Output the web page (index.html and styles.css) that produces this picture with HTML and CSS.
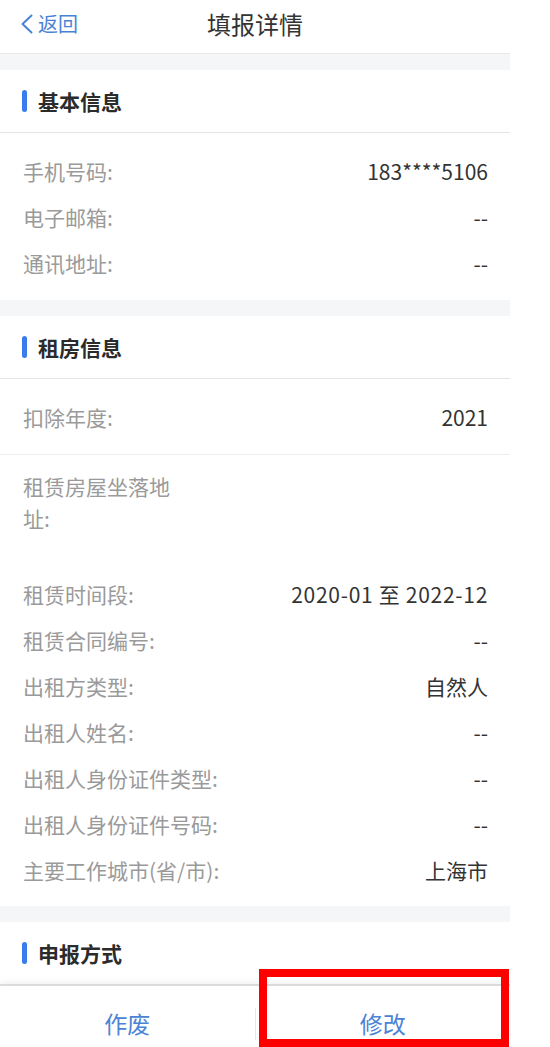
FILE: index.html
```html
<!DOCTYPE html>
<html lang="zh-CN">
<head>
<meta charset="utf-8">
<title>填报详情</title>
<link rel="stylesheet" href="styles.css">
</head>
<body>
<div class="app">
  <header class="nav">
    <a class="back">
      <svg class="chev" width="14" height="20" viewBox="0 0 14 20"><polyline points="11.5,1.5 2.5,10 11.5,18.5" fill="none" stroke="#4a83d6" stroke-width="2" stroke-linecap="round" stroke-linejoin="round"/></svg>
      <span>返回</span>
    </a>
    <h1 class="nav-title">填报详情</h1>
    <span class="nav-side"></span>
  </header>

  <main class="content">
    <section class="card">
      <div class="card-title"><span class="bar"></span>基本信息</div>
      <div class="group">
        <div class="row"><span class="label">手机号码:</span><span class="value">183****5106</span></div>
        <div class="row"><span class="label">电子邮箱:</span><span class="value">--</span></div>
        <div class="row"><span class="label">通讯地址:</span><span class="value">--</span></div>
      </div>
    </section>

    <section class="card">
      <div class="card-title"><span class="bar"></span>租房信息</div>
      <div class="group group-split">
        <div class="row"><span class="label">扣除年度:</span><span class="value">2021</span></div>
      </div>
      <div class="group group-last">
        <div class="row row-tall"><span class="label label-wrap">租赁房屋坐落地址:</span><span class="value"></span></div>
        <div class="row"><span class="label">租赁时间段:</span><span class="value value-wide">2020-01 至 2022-12</span></div>
        <div class="row"><span class="label">租赁合同编号:</span><span class="value">--</span></div>
        <div class="row"><span class="label">出租方类型:</span><span class="value">自然人</span></div>
        <div class="row"><span class="label">出租人姓名:</span><span class="value">--</span></div>
        <div class="row"><span class="label">出租人身份证件类型:</span><span class="value">--</span></div>
        <div class="row"><span class="label">出租人身份证件号码:</span><span class="value">--</span></div>
        <div class="row"><span class="label">主要工作城市(省/市):</span><span class="value">上海市</span></div>
      </div>
    </section>

    <section class="card">
      <div class="card-title"><span class="bar"></span>申报方式</div>
    </section>
  </main>

  <footer class="actions">
    <button class="action">作废</button>
    <span class="divider"></span>
    <button class="action">修改</button>
  </footer>

  <div class="highlight"></div>
</div>
</body>
</html>
```

FILE: styles.css
```css
* { box-sizing: border-box; }

html, body {
  margin: 0;
  padding: 0;
  background: #ffffff;
}

body {
  font-family: "Noto Sans CJK SC", "Noto Sans", sans-serif;
  color: #333333;
}

.app {
  position: relative;
  width: 510px;
  height: 1047px;
  display: flex;
  flex-direction: column;
  overflow: hidden;
}

/* ---------- nav ---------- */
.nav {
  flex: 0 0 auto;
  height: 54px;
  padding-bottom: 6px;
  display: grid;
  grid-template-columns: 1fr auto 1fr;
  align-items: center;
  background: #fff;
  border-bottom: 1px solid #e9eaec;
}

.back {
  display: flex;
  align-items: center;
  gap: 4px;
  padding-left: 20px;
  color: #4a83d6;
  font-size: 20px;
  line-height: 26px;
}

.chev { display: block; }

.nav-title {
  margin: 0;
  font-size: 24px;
  font-weight: 400;
  color: #333;
  line-height: 30px;
}

/* ---------- content ---------- */
.content {
  flex: 1 1 auto;
  overflow: hidden;
  background: #f5f6f8;
  padding-top: 16px;
  display: flex;
  flex-direction: column;
  gap: 16px;
}

.card {
  background: #fff;
}

.card-title {
  height: 63px;
  display: flex;
  align-items: center;
  gap: 11px;
  padding-left: 22px;
  font-size: 21px;
  font-weight: 700;
  color: #2b2b2b;
  border-bottom: 1px solid #e4e4e4;
}

.bar {
  width: 5px;
  height: 22px;
  border-radius: 3px;
  background: #3b7cec;
}

.group {
  padding: 15px 22px 14px 23px;
}

.group-split {
  border-bottom: 1px solid #eeeeee;
}

.group-last {
  padding-bottom: 13px;
}

.row {
  display: flex;
  justify-content: space-between;
  align-items: center;
  height: 46px;
  font-size: 21px;
}

.label {
  color: #9a9a9a;
  white-space: nowrap;
}

.value {
  color: #333333;
  text-align: right;
  white-space: nowrap;
}

.value-wide {
  letter-spacing: 0.7px;
}

.row-tall {
  height: auto;
  align-items: flex-start;
  line-height: 32px;
  padding-bottom: 37px;
}

.label-wrap {
  white-space: normal;
  width: 152px;
}

/* ---------- footer ---------- */
.actions {
  flex: 0 0 62px;
  display: flex;
  align-items: flex-start;
  background: #fff;
  border-top: 1px solid #dcdcdc;
  box-shadow: 0 -3px 6px rgba(0, 0, 0, 0.06);
  position: relative;
}

.action {
  flex: 1 1 0;
  height: 48px;
  margin-top: 13px;
  border: 0;
  background: transparent;
  font-family: inherit;
  font-size: 23px;
  line-height: 48px;
  color: #4a83d6;
  padding: 0;
}

.divider {
  flex: 0 0 1px;
  height: 32px;
  margin-top: 22px;
  background: #e6e6e6;
}

/* ---------- annotation overlay ---------- */
.highlight {
  position: absolute;
  left: 259px;
  top: 969px;
  width: 250px;
  height: 78px;
  border: 8px solid #ff0000;
  pointer-events: none;
}
```
